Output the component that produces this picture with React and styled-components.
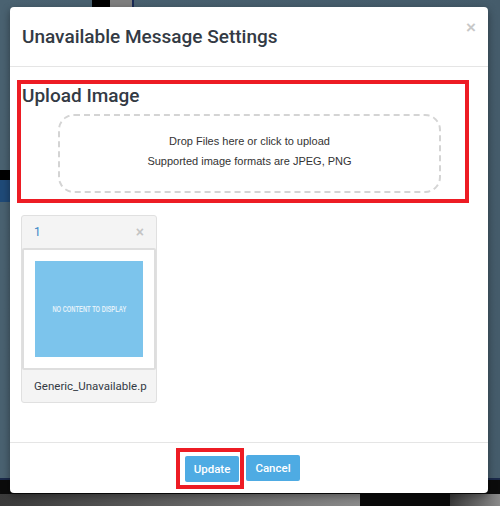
import React from 'react';
import styled, { createGlobalStyle } from 'styled-components';

const GlobalStyle = createGlobalStyle`
  html, body {
    margin: 0;
    padding: 0;
    width: 500px;
    height: 506px;
    overflow: hidden;
    background: #465e6d;
    font-family: Roboto, "Liberation Sans", Arial, sans-serif;
  }
`;

const Backdrop = styled.div`
  position: relative;
  width: 500px;
  height: 506px;
  background: linear-gradient(90deg, #4a6271 0%, #455c6b 100%);
`;

/* bits of the page behind the dialog */
const Scrap = styled.div`
  position: absolute;
  left: ${({ $x }) => $x}px;
  top: ${({ $y }) => $y}px;
  width: ${({ $w }) => $w}px;
  height: ${({ $h }) => $h}px;
  background: ${({ $bg }) => $bg};
`;

const Dialog = styled.div`
  position: absolute;
  left: 10px;
  top: 7px;
  width: 478px;
  height: 486px;
  background: #fff;
  border-radius: 4px;
  display: flex;
  flex-direction: column;
  box-shadow: 0 3px 9px rgba(0, 0, 0, 0.4);
`;

const Header = styled.div`
  height: 59px;
  padding: 0 12px;
  border-bottom: 1px solid #e5e5e5;
  display: flex;
  align-items: center;
  position: relative;
`;

const Title = styled.h4`
  margin: 0;
  font-size: 19px;
  font-weight: 500;
  color: #333a44;
`;

const CloseButton = styled.button`
  position: absolute;
  top: 12px;
  right: 12px;
  padding: 0;
  border: none;
  background: none;
  font-family: "Liberation Sans", Arial, sans-serif;
  font-size: 17px;
  font-weight: 700;
  line-height: 1;
  color: #c8c8c8;
  cursor: pointer;
`;

const Body = styled.div`
  flex: 1;
  padding: 13px 7px 0;
  display: flex;
  flex-direction: column;
  align-items: flex-start;
`;

const Highlight = styled.div`
  border: 4px solid #ed1c24;
  box-sizing: border-box;
  width: ${({ $w }) => $w}px;
  height: ${({ $h }) => $h}px;
`;

const UploadSection = styled(Highlight)`
  padding: 0 0 0 1px;
  display: flex;
  flex-direction: column;
`;

const SectionTitle = styled.h3`
  margin: 0;
  font-size: 19px;
  font-weight: 500;
  line-height: 24px;
  color: #333a44;
`;

const DropZone = styled.div`
  margin: 6px 0 0 36px;
  width: 383px;
  height: 79px;
  box-sizing: border-box;
  border: 2px dashed #d4d4d4;
  border-radius: 16px;
  padding-bottom: 5px;
  display: flex;
  flex-direction: column;
  align-items: center;
  justify-content: center;
  gap: 8px;
  font-family: "Liberation Sans", Arial, sans-serif;
  font-size: 11px;
  color: #333;
  cursor: pointer;
`;

const FileCard = styled.div`
  margin: 12px 0 0 4px;
  width: 136px;
  border: 1px solid #e0e0e0;
  border-radius: 3px;
  background: #f4f4f4;
  box-sizing: border-box;
  display: flex;
  flex-direction: column;
`;

const CardHeader = styled.div`
  height: 32px;
  padding: 0 12px 0 12px;
  display: flex;
  align-items: center;
  justify-content: space-between;
  font-size: 12px;
  color: #3a87c8;
`;

const SmallClose = styled.span`
  font-family: "Liberation Sans", Arial, sans-serif;
  font-size: 14px;
  font-weight: 700;
  color: #c4c4c4;
`;

const Preview = styled.div`
  height: 122px;
  background: #fff;
  border: 2px solid #dedede;
  border-radius: 2px;
  box-sizing: border-box;
  display: flex;
  align-items: center;
  justify-content: center;
`;

const Placeholder = styled.div`
  width: 108px;
  height: 96px;
  background: #7cc4ec;
  display: flex;
  align-items: center;
  justify-content: center;
`;

const PlaceholderText = styled.span`
  font-family: "Liberation Sans", Arial, sans-serif;
  font-size: 8.5px;
  font-weight: 700;
  color: #e2f1fa;
  white-space: nowrap;
  transform: scaleX(0.68);
`;

const FileName = styled.div`
  height: 32px;
  padding: 0 12px;
  display: flex;
  align-items: center;
  font-size: 11.5px;
  color: #333a44;
  white-space: nowrap;
  overflow: hidden;
`;

const Footer = styled.div`
  height: 50px;
  border-top: 1px solid #e5e5e5;
  display: flex;
  align-items: center;
  gap: 2px;
  padding-left: 166px;
`;

const ButtonFrame = styled(Highlight)`
  display: flex;
  align-items: center;
  padding: 1px 0 0 5px;
`;

const Button = styled.button`
  width: 54px;
  height: 26px;
  border: none;
  border-radius: 2px;
  background: #4eabe3;
  color: #fff;
  font-family: Roboto, "Liberation Sans", Arial, sans-serif;
  font-size: 11.5px;
  font-weight: 500;
  cursor: pointer;
  padding: 0;
`;

const App = () => {
  return (
    <>
      <GlobalStyle />
      <Backdrop>
        <Scrap $x={92} $y={0} $w={18} $h={7} $bg="#000" />
        <Scrap $x={110} $y={0} $w={22} $h={7} $bg="#7f7f7f" />
        <Scrap $x={132} $y={0} $w={2} $h={7} $bg="#1a2a55" />
        <Scrap $x={0} $y={170} $w={10} $h={10} $bg="#000" />
        <Scrap $x={0} $y={180} $w={10} $h={22} $bg="#1f4a78" />
        <Scrap $x={0} $y={478} $w={500} $h={2} $bg="#1b2a4a" />
        <Scrap $x={0} $y={480} $w={500} $h={26} $bg="#0b0b0b" />
        <Scrap $x={0} $y={494} $w={360} $h={12} $bg="linear-gradient(90deg, #3a3a3a, #8a8a8a)" />
        <Scrap $x={450} $y={494} $w={50} $h={12} $bg="linear-gradient(90deg, #3a3a3a, #8a8a8a)" />

        <Dialog>
          <Header>
            <Title>Unavailable Message Settings</Title>
            <CloseButton aria-label="Close">×</CloseButton>
          </Header>

          <Body>
            <UploadSection $w={452} $h={123}>
              <SectionTitle>Upload Image</SectionTitle>
              <DropZone>
                <span>Drop Files here or click to upload</span>
                <span>Supported image formats are JPEG, PNG</span>
              </DropZone>
            </UploadSection>

            <FileCard>
              <CardHeader>
                <span>1</span>
                <SmallClose>×</SmallClose>
              </CardHeader>
              <Preview>
                <Placeholder>
                  <PlaceholderText>NO CONTENT TO DISPLAY</PlaceholderText>
                </Placeholder>
              </Preview>
              <FileName>Generic_Unavailable.p</FileName>
            </FileCard>
          </Body>

          <Footer>
            <ButtonFrame $w={68} $h={41}>
              <Button>Update</Button>
            </ButtonFrame>
            <Button>Cancel</Button>
          </Footer>
        </Dialog>
      </Backdrop>
    </>
  );
};

export default App;
